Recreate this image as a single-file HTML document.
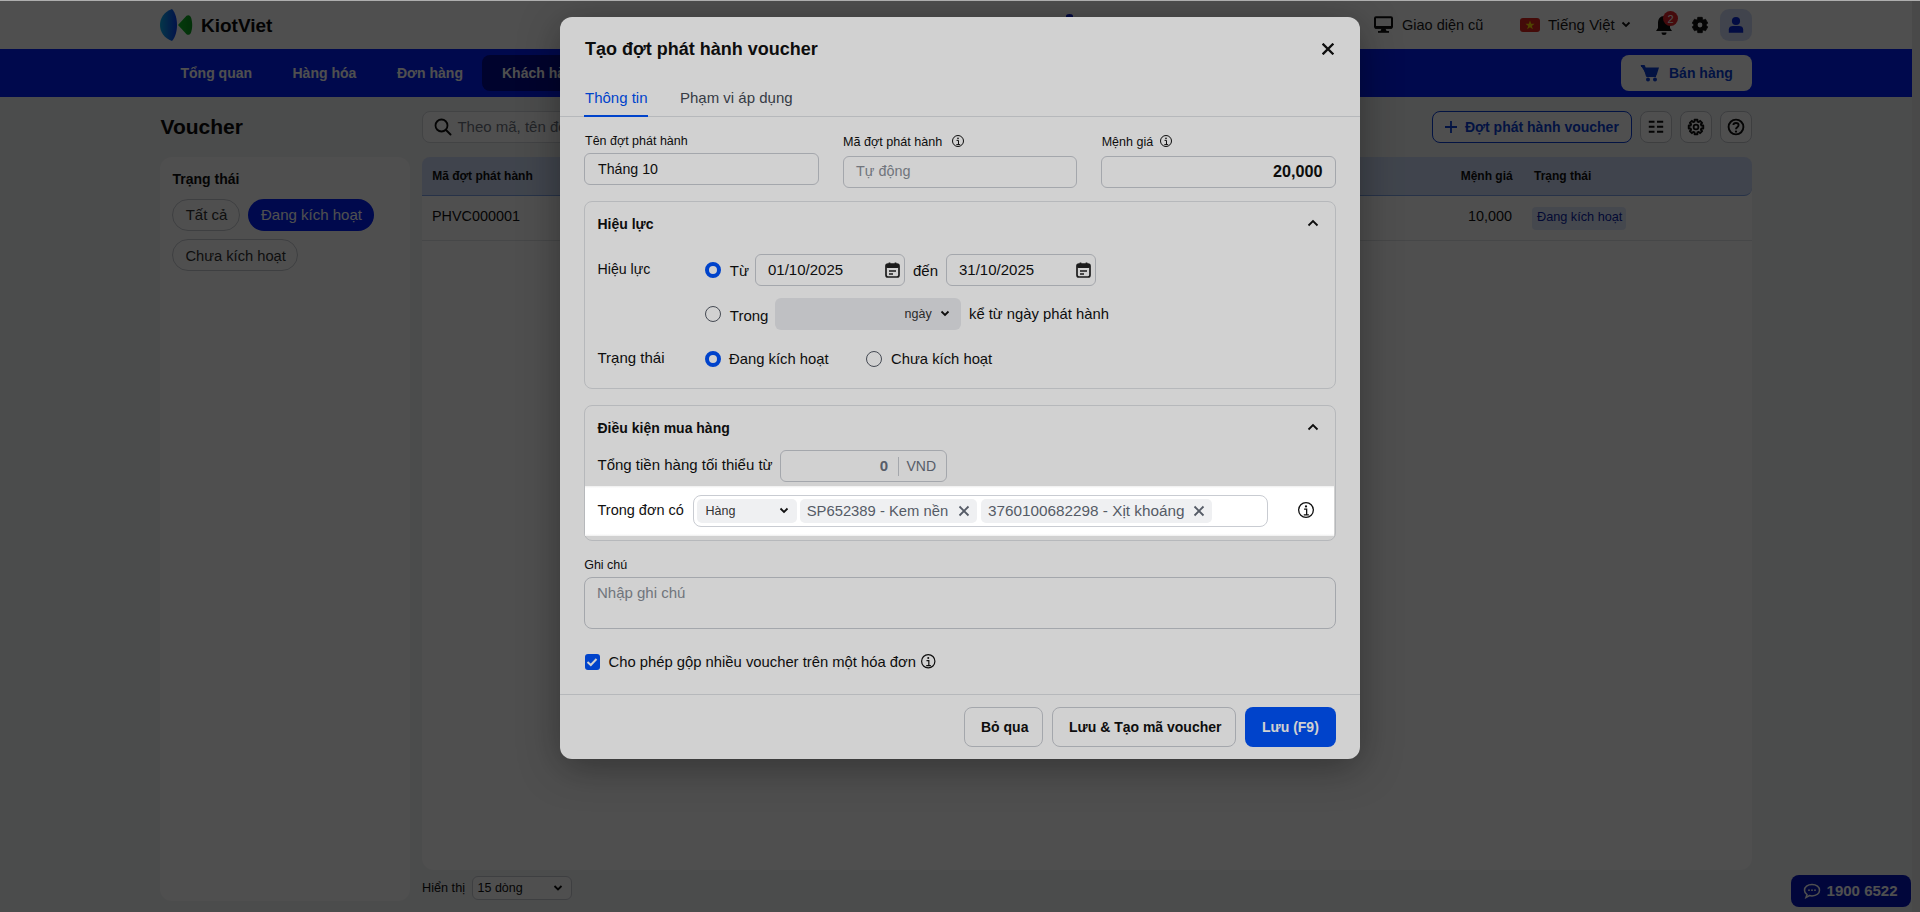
<!DOCTYPE html><html><head><meta charset="utf-8"><style>
html,body{margin:0;padding:0;width:1920px;height:912px;overflow:hidden;background:#f2f3f5;font-family:"Liberation Sans", sans-serif;}
.t{position:absolute;white-space:nowrap;font-family:"Liberation Sans", sans-serif;}
.b{position:absolute;box-sizing:border-box;}
</style></head><body>

<div class="b" style="left:0px;top:0px;width:1912px;height:49px;background:#ffffff;"></div>
<div class="b" style="left:1912px;top:0px;width:8px;height:912px;background:#e9eaec;"></div>
<svg class="b" style="left:158px;top:8px;" width="36" height="34" viewBox="0 0 36 34"><defs><linearGradient id="lg1" x1="0" x2="1"><stop offset="0" stop-color="#12b0e8"/><stop offset="1" stop-color="#0a3ff0"/></linearGradient><linearGradient id="lg2" x1="0" x2="1"><stop offset="0" stop-color="#13c02a"/><stop offset="1" stop-color="#0a9a20"/></linearGradient></defs>
<path d="M14 1 C6 4 2 10 2 17 C2 24 6 30 14 33 C17.5 29 19 23 19 17 C19 11 17.5 5 14 1 Z" fill="url(#lg1)"/>
<path d="M20 17 L28.5 7.8 C30.5 6.3 32.5 7.5 33.2 10 C34 13 34.2 15 34.2 17 C34.2 19 34 21 33.2 24 C32.5 26.5 30.5 27.7 28.5 26.2 Z" fill="url(#lg2)"/></svg>
<div class="t" style="left:201px;top:12.52px;font-size:19px;line-height:25px;font-weight:700;color:#0d0d0d;">KiotViet</div>
<svg class="b" style="left:1374px;top:16px;" width="19" height="17" viewBox="0 0 19 17"><rect x="1" y="1.2" width="17" height="10.6" rx="1" fill="none" stroke="#111" stroke-width="2"/><rect x="1" y="10" width="17" height="2.6" fill="#111"/><path d="M7.5 12.5 L11.5 12.5 L12.5 15 L6.5 15 Z" fill="#111"/><rect x="4" y="15" width="11" height="1.8" fill="#111"/></svg>
<div class="t" style="left:1402px;top:16.08px;font-size:14.5px;line-height:19px;font-weight:400;color:#1a1a1a;">Giao diện cũ</div>
<div class="b" style="left:1520px;top:18px;width:20px;height:14px;background:#da251d;border-radius:3px;"></div>
<svg class="b" style="left:1525px;top:20px;" width="10" height="10" viewBox="0 0 10 10"><polygon points="5,0.5 6.2,3.8 9.6,3.8 6.8,5.9 7.9,9.3 5,7.2 2.1,9.3 3.2,5.9 0.4,3.8 3.8,3.8" fill="#ffde00"/></svg>
<div class="t" style="left:1548px;top:15.40px;font-size:15px;line-height:20px;font-weight:400;color:#1a1a1a;">Tiếng Việt</div>
<svg class="b" style="left:1621px;top:21px;" width="10" height="7" viewBox="0 0 10 7"><path d="M1.5 1.5 L5 5 L8.5 1.5" fill="none" stroke="#111" stroke-width="1.8"/></svg>
<svg class="b" style="left:1654px;top:15px;" width="20" height="21" viewBox="0 0 20 21"><path d="M10 1 C6 1 4 4 4 8 L4 13 L2 16 L18 16 L16 13 L16 8 C16 4 14 1 10 1 Z" fill="#111"/><path d="M7.5 17.5 A2.5 2.5 0 0 0 12.5 17.5 Z" fill="#111"/></svg>
<div class="b" style="left:1663px;top:10.5px;width:15px;height:15.0px;background:#e0262a;border-radius:50%;"></div>
<div class="t" style="left:1670.5px;top:12.19px;font-size:11px;line-height:14px;font-weight:400;color:#fff;transform:translateX(-50%);">2</div>
<svg class="b" style="left:1691px;top:16px;" width="18" height="18" viewBox="0 0 18 18"><path d="M6.61 3.17 L6.73 1.33 L11.27 1.33 L11.39 3.17 L12.85 4.02 L14.51 3.20 L16.78 7.13 L15.24 8.15 L15.24 9.85 L16.78 10.87 L14.51 14.80 L12.85 13.98 L11.39 14.83 L11.27 16.67 L6.73 16.67 L6.61 14.83 L5.15 13.98 L3.49 14.80 L1.22 10.87 L2.76 9.85 L2.76 8.15 L1.22 7.13 L3.49 3.20 L5.15 4.02 Z" fill="#111" stroke="#111" stroke-width="0.8" stroke-linejoin="round"/><circle cx="9" cy="9" r="2.4" fill="#fff"/></svg>
<div class="b" style="left:1720px;top:9px;width:32px;height:32px;background:#d3def6;border-radius:9px;"></div>
<svg class="b" style="left:1726px;top:15px;" width="20" height="19" viewBox="0 0 20 19"><circle cx="10" cy="6" r="4.1" fill="#0a28d8"/><path d="M2.8 17.8 L2.8 14.5 C2.8 12 4.5 11 7 11 L13 11 C15.5 11 17.2 12 17.2 14.5 L17.2 17.8 Z" fill="#0a28d8"/></svg>
<div class="b" style="left:0px;top:49px;width:1912px;height:48px;background:#001ff8;"></div>
<div class="t" style="left:180.5px;top:63.75px;font-size:14px;line-height:18px;font-weight:700;color:#ffffff;">Tổng quan</div>
<div class="t" style="left:292.5px;top:63.75px;font-size:14px;line-height:18px;font-weight:700;color:#ffffff;">Hàng hóa</div>
<div class="t" style="left:397px;top:63.75px;font-size:14px;line-height:18px;font-weight:700;color:#ffffff;">Đơn hàng</div>
<div class="b" style="left:482px;top:55px;width:158px;height:36px;background:#000b90;border-radius:8px;"></div>
<div class="t" style="left:502px;top:63.75px;font-size:14px;line-height:18px;font-weight:700;color:#ffffff;">Khách hàng</div>
<div class="b" style="left:1621px;top:55px;width:131px;height:36px;background:#ffffff;border-radius:8px;"></div>
<svg class="b" style="left:1640px;top:64px;" width="20" height="18" viewBox="0 0 20 18"><path d="M0.5 1 L4 1 L4.8 3.5 L19 3.5 L16.5 11.5 L7 11.5 Z" fill="#0b3fd6"/><path d="M1 2 L4 2 L7 12 L16 12" fill="none" stroke="#0b3fd6" stroke-width="2.2" stroke-linejoin="round"/><circle cx="8" cy="15.5" r="2" fill="#0b3fd6"/><circle cx="15" cy="15.5" r="2" fill="#0b3fd6"/></svg>
<div class="t" style="left:1669px;top:63.75px;font-size:14px;line-height:18px;font-weight:700;color:#0b3fd6;">Bán hàng</div>
<div class="t" style="left:160.5px;top:113.22px;font-size:21px;line-height:27px;font-weight:700;color:#0d0d0d;">Voucher</div>
<div class="b" style="left:422px;top:111px;width:578px;height:32px;background:#fff;border:1px solid #d4d7dc;border-radius:8px;"></div>
<svg class="b" style="left:434px;top:118px;" width="18" height="18" viewBox="0 0 18 18"><circle cx="7.5" cy="7.5" r="6" fill="none" stroke="#111" stroke-width="1.8"/><path d="M12 12 L16.5 16.5" stroke="#111" stroke-width="2" stroke-linecap="round"/></svg>
<div class="t" style="left:457.4px;top:116.80px;font-size:15px;line-height:20px;font-weight:400;color:#6f7580;">Theo mã, tên đợt phát hành</div>
<div class="b" style="left:1432px;top:111px;width:200px;height:32px;background:#fff;border:1px solid #0b3fd6;border-radius:8px;"></div>
<svg class="b" style="left:1444px;top:120px;" width="14" height="14" viewBox="0 0 14 14"><path d="M7 1 L7 13 M1 7 L13 7" stroke="#0b3fd6" stroke-width="1.8"/></svg>
<div class="t" style="left:1465px;top:118.15px;font-size:14px;line-height:18px;font-weight:700;color:#0b3fd6;">Đợt phát hành voucher</div>
<div class="b" style="left:1640px;top:111px;width:32px;height:32px;background:#fff;border:1px solid #c4c8ce;border-radius:8px;"></div>
<div class="b" style="left:1680px;top:111px;width:32px;height:32px;background:#fff;border:1px solid #c4c8ce;border-radius:8px;"></div>
<div class="b" style="left:1720px;top:111px;width:32px;height:32px;background:#fff;border:1px solid #c4c8ce;border-radius:8px;"></div>
<svg class="b" style="left:1648px;top:119px;" width="16" height="16" viewBox="0 0 16 16"><path d="M0.8 2.8 H6.5 M0.8 7.8 H6.5 M0.8 12.7 H6.5 M9 2.8 H15.2 M9 7.8 H15.2 M9 12.7 H15.2" stroke="#111" stroke-width="2"/></svg>
<svg class="b" style="left:1687px;top:118px;" width="18" height="18" viewBox="0 0 18 18"><path d="M14.40 7.53 L16.26 7.56 L16.26 10.44 L14.40 10.47 L13.86 11.78 L15.15 13.11 L13.11 15.15 L11.78 13.86 L10.47 14.40 L10.44 16.26 L7.56 16.26 L7.53 14.40 L6.22 13.86 L4.89 15.15 L2.85 13.11 L4.14 11.78 L3.60 10.47 L1.74 10.44 L1.74 7.56 L3.60 7.53 L4.14 6.22 L2.85 4.89 L4.89 2.85 L6.22 4.14 L7.53 3.60 L7.56 1.74 L10.44 1.74 L10.47 3.60 L11.78 4.14 L13.11 2.85 L15.15 4.89 L13.86 6.22 Z" fill="none" stroke="#111" stroke-width="1.9" stroke-linejoin="round"/><circle cx="9" cy="9" r="2.4" fill="none" stroke="#111" stroke-width="1.8"/></svg>
<svg class="b" style="left:1727px;top:118px;" width="18" height="18" viewBox="0 0 18 18"><circle cx="9" cy="9" r="7.4" fill="none" stroke="#111" stroke-width="1.9"/><path d="M6.4 7.1 C6.4 4.2 11.6 4.2 11.6 7.1 C11.6 9.2 9 9.2 9 11.2" fill="none" stroke="#111" stroke-width="1.9"/><circle cx="9" cy="13.6" r="1.15" fill="#111"/></svg>
<div class="b" style="left:160px;top:157px;width:250px;height:744px;background:#fff;border-radius:12px;"></div>
<div class="t" style="left:172.5px;top:170.35px;font-size:14px;line-height:18px;font-weight:700;color:#111;">Trạng thái</div>
<div class="b" style="left:172px;top:199px;width:68px;height:32px;background:#fff;border:1px solid #c9ccd2;border-radius:16px;"></div>
<div class="t" style="left:185.7px;top:204.80px;font-size:15px;line-height:20px;font-weight:400;color:#333;">Tất cả</div>
<div class="b" style="left:248px;top:199px;width:126px;height:32px;background:#001ff8;border-radius:16px;"></div>
<div class="t" style="left:261px;top:204.80px;font-size:15px;line-height:20px;font-weight:400;color:#fff;">Đang kích hoạt</div>
<div class="b" style="left:172px;top:239px;width:126px;height:32px;background:#fff;border:1px solid #c9ccd2;border-radius:16px;"></div>
<div class="t" style="left:185.4px;top:246.61px;font-size:14.7px;line-height:19px;font-weight:400;color:#333;">Chưa kích hoạt</div>
<div class="b" style="left:422px;top:157px;width:1330px;height:713px;background:#fff;border-radius:12px;"></div>
<div class="b" style="left:422px;top:157px;width:1330px;height:39px;background:#cfdcf6;border-radius:8px 8px 8px 0;border-bottom:1px solid #7fa3e8;"></div>
<div class="t" style="left:432.2px;top:168.34px;font-size:12px;line-height:16px;font-weight:700;color:#111;">Mã đợt phát hành</div>
<div class="t" style="right:407.29999999999995px;top:168.34px;font-size:12px;line-height:16px;font-weight:700;color:#111;">Mệnh giá</div>
<div class="t" style="left:1534px;top:168.34px;font-size:12px;line-height:16px;font-weight:700;color:#111;">Trạng thái</div>
<div class="b" style="left:422px;top:240px;width:1330px;height:1px;background:#e3e5e8;"></div>
<div class="t" style="left:432px;top:207.01px;font-size:14.4px;line-height:19px;font-weight:400;color:#111;">PHVC000001</div>
<div class="t" style="right:408px;top:207.01px;font-size:14.4px;line-height:19px;font-weight:400;color:#111;">10,000</div>
<div class="b" style="left:1532px;top:207px;width:94px;height:23px;background:#dfe8fb;border-radius:4px;"></div>
<div class="t" style="left:1537px;top:209.10px;font-size:12.7px;line-height:17px;font-weight:400;color:#0a1fa8;">Đang kích hoạt</div>
<div class="t" style="left:422px;top:880.10px;font-size:12.7px;line-height:17px;font-weight:400;color:#111;">Hiển thị</div>
<div class="b" style="left:472px;top:876px;width:100px;height:24px;background:#fff;border:1px solid #c9ccd2;border-radius:6px;"></div>
<div class="t" style="left:477.5px;top:879.67px;font-size:12.5px;line-height:16px;font-weight:400;color:#111;">15 dòng</div>
<svg class="b" style="left:553px;top:884px;" width="10" height="8" viewBox="0 0 10 8"><path d="M1.5 2 L5 5.5 L8.5 2" fill="none" stroke="#111" stroke-width="1.8"/></svg>
<div class="b" style="left:1791px;top:875px;width:120px;height:32px;background:#0617c0;border-radius:8px;"></div>
<svg class="b" style="left:1803px;top:883px;" width="18" height="16" viewBox="0 0 18 16"><path d="M9 1.5 C4.5 1.5 1.5 4 1.5 7.2 C1.5 9 2.5 10.6 4 11.6 L3 14.5 L6.5 12.6 C7.3 12.8 8.1 12.9 9 12.9 C13.5 12.9 16.5 10.4 16.5 7.2 C16.5 4 13.5 1.5 9 1.5 Z" fill="none" stroke="#fff" stroke-width="1.5"/><circle cx="6" cy="7.2" r="0.9" fill="#fff"/><circle cx="9" cy="7.2" r="0.9" fill="#fff"/><circle cx="12" cy="7.2" r="0.9" fill="#fff"/></svg>
<div class="t" style="left:1826.6px;top:880.80px;font-size:15px;line-height:20px;font-weight:700;color:#fff;">1900 6522</div>
<div class="b" style="left:1066px;top:14px;width:7px;height:4px;background:#0a1fd0;border-radius:50% 50% 0 0;"></div>
<div class="b" style="left:0px;top:0px;width:1920px;height:912px;background:rgba(0,0,0,0.62);"></div>
<div class="b" style="left:560px;top:17px;width:800px;height:742px;background:#fff;border-radius:12px;box-shadow:0 8px 40px rgba(0,0,0,0.35);"></div>
<div class="t" style="left:585px;top:38.46px;font-size:18px;line-height:23px;font-weight:700;color:#111;">Tạo đợt phát hành voucher</div>
<svg class="b" style="left:1322px;top:43px;" width="12" height="12" viewBox="0 0 12 12"><path d="M1.5 1.5 L10.5 10.5 M10.5 1.5 L1.5 10.5" stroke="#111" stroke-width="2.3" stroke-linecap="square"/></svg>
<div class="t" style="left:585px;top:87.70px;font-size:15px;line-height:20px;font-weight:400;color:#0052f8;">Thông tin</div>
<div class="t" style="left:680px;top:87.70px;font-size:15px;line-height:20px;font-weight:400;color:#444a55;">Phạm vi áp dụng</div>
<div class="b" style="left:560px;top:116px;width:800px;height:1px;background:#dfe1e5;"></div>
<div class="b" style="left:584px;top:115px;width:64px;height:2px;background:#0052f8;"></div>
<div class="t" style="left:585px;top:132.67px;font-size:12.5px;line-height:16px;font-weight:400;color:#111;">Tên đợt phát hành</div>
<div class="b" style="left:584px;top:153px;width:235px;height:32px;background:#fff;border:1px solid #c9ccd2;border-radius:6px;"></div>
<div class="t" style="left:598px;top:159.88px;font-size:14.2px;line-height:18px;font-weight:400;color:#111;">Tháng 10</div>
<div class="t" style="left:843px;top:134.13px;font-size:12.6px;line-height:16px;font-weight:400;color:#111;">Mã đợt phát hành</div>
<svg class="b" style="left:951.0px;top:134.0px;" width="14" height="14" viewBox="0 0 14 14"><circle cx="7.0" cy="7.0" r="5.5" fill="none" stroke="#111" stroke-width="1.0"/><circle cx="7.0" cy="4.359999999999999" r="0.8400000000000001" fill="#111"/><path d="M5.5600000000000005 6.4 H7.48 V10.6 M5.32 10.6 H9.16" fill="none" stroke="#111" stroke-width="1.0"/></svg>
<div class="b" style="left:843px;top:156px;width:234px;height:32px;background:#fff;border:1px solid #c9ccd2;border-radius:6px;"></div>
<div class="t" style="left:856px;top:162.31px;font-size:14.4px;line-height:19px;font-weight:400;color:#8a8f98;">Tự động</div>
<div class="t" style="left:1101.7px;top:134.17px;font-size:12.5px;line-height:16px;font-weight:400;color:#111;">Mệnh giá</div>
<svg class="b" style="left:1159.0px;top:134.0px;" width="14" height="14" viewBox="0 0 14 14"><circle cx="7.0" cy="7.0" r="5.5" fill="none" stroke="#111" stroke-width="1.0"/><circle cx="7.0" cy="4.359999999999999" r="0.8400000000000001" fill="#111"/><path d="M5.5600000000000005 6.4 H7.48 V10.6 M5.32 10.6 H9.16" fill="none" stroke="#111" stroke-width="1.0"/></svg>
<div class="b" style="left:1101px;top:156px;width:235px;height:32px;background:#fff;border:1px solid #c9ccd2;border-radius:6px;"></div>
<div class="t" style="right:597.5px;top:161.39px;font-size:16.2px;line-height:21px;font-weight:700;color:#111;">20,000</div>
<div class="b" style="left:584px;top:201px;width:752px;height:188px;background:#fff;border:1px solid #dfe1e5;border-radius:8px;"></div>
<div class="t" style="left:597.5px;top:215.15px;font-size:14px;line-height:18px;font-weight:700;color:#111;">Hiệu lực</div>
<svg class="b" style="left:1307px;top:219px;" width="12" height="8" viewBox="0 0 12 8"><path d="M1.5 6.5 L6 2 L10.5 6.5" fill="none" stroke="#111" stroke-width="1.8"/></svg>
<div class="t" style="left:597.5px;top:260.08px;font-size:14.2px;line-height:18px;font-weight:400;color:#111;">Hiệu lực</div>
<div class="b" style="left:705px;top:262px;width:16px;height:16px;background:#fff;border:4.5px solid #0052f8;border-radius:50%;"></div>
<div class="t" style="left:729.8px;top:260.50px;font-size:15px;line-height:20px;font-weight:400;color:#111;">Từ</div>
<div class="b" style="left:755px;top:254px;width:150px;height:32px;background:#fff;border:1px solid #c9ccd2;border-radius:6px;"></div>
<div class="t" style="left:768px;top:259.80px;font-size:15px;line-height:20px;font-weight:400;color:#111;">01/10/2025</div>
<svg class="b" style="left:885px;top:262px;" width="15" height="16" viewBox="0 0 15 16"><rect x="1" y="2" width="13" height="13" rx="2" fill="none" stroke="#222" stroke-width="1.7"/><rect x="1" y="2" width="13" height="4" rx="1.5" fill="#222"/><path d="M4.5 0.5 V3 M10.5 0.5 V3" stroke="#222" stroke-width="1.7"/><path d="M4 9 H11 M4 12 H8" stroke="#222" stroke-width="1.5"/></svg>
<div class="t" style="left:913px;top:260.50px;font-size:15px;line-height:20px;font-weight:400;color:#111;">đến</div>
<div class="b" style="left:946px;top:254px;width:150px;height:32px;background:#fff;border:1px solid #c9ccd2;border-radius:6px;"></div>
<div class="t" style="left:959px;top:259.80px;font-size:15px;line-height:20px;font-weight:400;color:#111;">31/10/2025</div>
<svg class="b" style="left:1076px;top:262px;" width="15" height="16" viewBox="0 0 15 16"><rect x="1" y="2" width="13" height="13" rx="2" fill="none" stroke="#222" stroke-width="1.7"/><rect x="1" y="2" width="13" height="4" rx="1.5" fill="#222"/><path d="M4.5 0.5 V3 M10.5 0.5 V3" stroke="#222" stroke-width="1.7"/><path d="M4 9 H11 M4 12 H8" stroke="#222" stroke-width="1.5"/></svg>
<div class="b" style="left:705px;top:306px;width:16px;height:16px;background:#fff;border:1px solid #555b66;border-radius:50%;"></div>
<div class="t" style="left:729.8px;top:305.80px;font-size:15px;line-height:20px;font-weight:400;color:#111;">Trong</div>
<div class="b" style="left:775px;top:298px;width:186px;height:32px;background:#eaebee;border-radius:6px;"></div>
<div class="t" style="left:904.6px;top:305.67px;font-size:12.5px;line-height:16px;font-weight:400;color:#333;">ngày</div>
<svg class="b" style="left:940px;top:310px;" width="10" height="7" viewBox="0 0 10 7"><path d="M1.5 1.5 L5 5 L8.5 1.5" fill="none" stroke="#111" stroke-width="1.8"/></svg>
<div class="t" style="left:969px;top:305.37px;font-size:14.8px;line-height:19px;font-weight:400;color:#111;">kể từ ngày phát hành</div>
<div class="t" style="left:597.5px;top:348.20px;font-size:15px;line-height:20px;font-weight:400;color:#111;">Trạng thái</div>
<div class="b" style="left:705px;top:351px;width:16px;height:16px;background:#fff;border:4.5px solid #0052f8;border-radius:50%;"></div>
<div class="t" style="left:729px;top:349.87px;font-size:14.8px;line-height:19px;font-weight:400;color:#111;">Đang kích hoạt</div>
<div class="b" style="left:866px;top:351px;width:16px;height:16px;background:#fff;border:1px solid #555b66;border-radius:50%;"></div>
<div class="t" style="left:891px;top:349.87px;font-size:14.8px;line-height:19px;font-weight:400;color:#111;">Chưa kích hoạt</div>
<div class="b" style="left:584px;top:405px;width:752px;height:136px;background:#fff;border:1px solid #dfe1e5;border-radius:8px;"></div>
<div class="t" style="left:597.5px;top:419.15px;font-size:14px;line-height:18px;font-weight:700;color:#111;">Điều kiện mua hàng</div>
<svg class="b" style="left:1307px;top:423px;" width="12" height="8" viewBox="0 0 12 8"><path d="M1.5 6.5 L6 2 L10.5 6.5" fill="none" stroke="#111" stroke-width="1.8"/></svg>
<div class="t" style="left:597.5px;top:454.80px;font-size:15px;line-height:20px;font-weight:400;color:#111;">Tổng tiền hàng tối thiểu từ</div>
<div class="b" style="left:780px;top:450px;width:167px;height:32px;background:#fff;border:1px solid #c9ccd2;border-radius:6px;"></div>
<div class="t" style="right:1032px;top:455.80px;font-size:15px;line-height:20px;font-weight:700;color:#6b7280;">0</div>
<div class="b" style="left:898px;top:457px;width:1px;height:19px;background:#c9ccd2;"></div>
<div class="t" style="left:906.5px;top:457.15px;font-size:14px;line-height:18px;font-weight:400;color:#6b7280;">VND</div>
<div class="t" style="left:584.2px;top:556.87px;font-size:12.5px;line-height:16px;font-weight:400;color:#111;">Ghi chú</div>
<div class="b" style="left:584px;top:577px;width:752px;height:52px;background:#fff;border:1px solid #c9ccd2;border-radius:8px;"></div>
<div class="t" style="left:597px;top:583.10px;font-size:15px;line-height:20px;font-weight:400;color:#8a8f98;">Nhập ghi chú</div>
<div class="b" style="left:584.5px;top:654px;width:15.5px;height:15.5px;background:#0052f8;border-radius:3px;"></div>
<svg class="b" style="left:586px;top:656.5px;" width="12" height="10" viewBox="0 0 12 10"><path d="M1.5 5 L4.8 8 L10.5 2" fill="none" stroke="#fff" stroke-width="2"/></svg>
<div class="t" style="left:608.5px;top:652.87px;font-size:14.8px;line-height:19px;font-weight:400;color:#111;">Cho phép gộp nhiều voucher trên một hóa đơn</div>
<svg class="b" style="left:920.05px;top:652.75px;" width="16.5" height="16.5" viewBox="0 0 16.5 16.5"><circle cx="8.25" cy="8.25" r="6.65" fill="none" stroke="#111" stroke-width="1.2"/><circle cx="8.25" cy="5.0600000000000005" r="1.0150000000000001" fill="#111"/><path d="M6.51 7.525 H8.83 V12.6 M6.22 12.6 H10.86" fill="none" stroke="#111" stroke-width="1.2"/></svg>
<div class="b" style="left:560px;top:694px;width:800px;height:1px;background:#dfe1e5;"></div>
<div class="b" style="left:964px;top:707px;width:79px;height:40px;background:#fff;border:1px solid #c9ccd2;border-radius:8px;"></div>
<div class="t" style="left:981px;top:717.65px;font-size:14px;line-height:18px;font-weight:700;color:#111;">Bỏ qua</div>
<div class="b" style="left:1052px;top:707px;width:184px;height:40px;background:#fff;border:1px solid #c9ccd2;border-radius:8px;"></div>
<div class="t" style="left:1069px;top:717.65px;font-size:14px;line-height:18px;font-weight:700;color:#111;">Lưu &amp; Tạo mã voucher</div>
<div class="b" style="left:1245px;top:707px;width:91px;height:40px;background:#0052f8;border-radius:8px;"></div>
<div class="t" style="left:1262px;top:717.65px;font-size:14px;line-height:18px;font-weight:700;color:#fff;">Lưu (F9)</div>
<div class="b" style="left:585px;top:486px;width:749px;height:50px;box-shadow:0 0 0 3000px rgba(0,0,0,0.18);"></div>
<div class="b" style="left:585px;top:486px;width:749px;height:50px;background:#fff;"></div>
<div class="t" style="left:597.5px;top:501.48px;font-size:14.5px;line-height:19px;font-weight:400;color:#111;">Trong đơn có</div>
<div class="b" style="left:693px;top:495px;width:575px;height:32px;background:#fff;border:1px solid #c9ccd2;border-radius:8px;"></div>
<div class="b" style="left:697px;top:499px;width:100px;height:24px;background:#eff0f2;border-radius:5px;"></div>
<div class="t" style="left:705.6px;top:502.97px;font-size:12.5px;line-height:16px;font-weight:400;color:#333;">Hàng</div>
<svg class="b" style="left:779px;top:507px;" width="10" height="7" viewBox="0 0 10 7"><path d="M1.5 1.5 L5 5 L8.5 1.5" fill="none" stroke="#111" stroke-width="1.8"/></svg>
<div class="b" style="left:800px;top:499px;width:177px;height:24px;background:#eff0f2;border-radius:5px;"></div>
<div class="t" style="left:806.7px;top:501.87px;font-size:14.8px;line-height:19px;font-weight:400;color:#555b66;">SP652389 - Kem nền</div>
<svg class="b" style="left:958px;top:505px;" width="12" height="12" viewBox="0 0 12 12"><path d="M1.5 1.5 L10.5 10.5 M10.5 1.5 L1.5 10.5" stroke="#555b66" stroke-width="1.8"/></svg>
<div class="b" style="left:981px;top:499px;width:231px;height:24px;background:#eff0f2;border-radius:5px;"></div>
<div class="t" style="left:988px;top:501.20px;font-size:15.3px;line-height:20px;font-weight:400;color:#555b66;">3760100682298 - Xịt khoáng</div>
<svg class="b" style="left:1192.5px;top:505px;" width="12" height="12" viewBox="0 0 12 12"><path d="M1.5 1.5 L10.5 10.5 M10.5 1.5 L1.5 10.5" stroke="#555b66" stroke-width="1.8"/></svg>
<svg class="b" style="left:1297.0px;top:501.0px;" width="18" height="18" viewBox="0 0 18 18"><circle cx="9.0" cy="9.0" r="7.35" fill="none" stroke="#111" stroke-width="1.3"/><circle cx="9.0" cy="5.48" r="1.12" fill="#111"/><path d="M7.08 8.2 H9.64 V13.8 M6.76 13.8 H11.879999999999999" fill="none" stroke="#111" stroke-width="1.3"/></svg>
<div class="b" style="left:585px;top:533.5px;width:749px;height:2.5px;background:linear-gradient(rgba(0,0,0,0),rgba(0,0,0,0.072));"></div>
<div class="b" style="left:585px;top:486px;width:749px;height:1.5px;background:linear-gradient(rgba(0,0,0,0.072),rgba(0,0,0,0));"></div>
<div class="b" style="left:0px;top:0px;width:1920px;height:1px;background:#aeaeae;"></div>
</body></html>
